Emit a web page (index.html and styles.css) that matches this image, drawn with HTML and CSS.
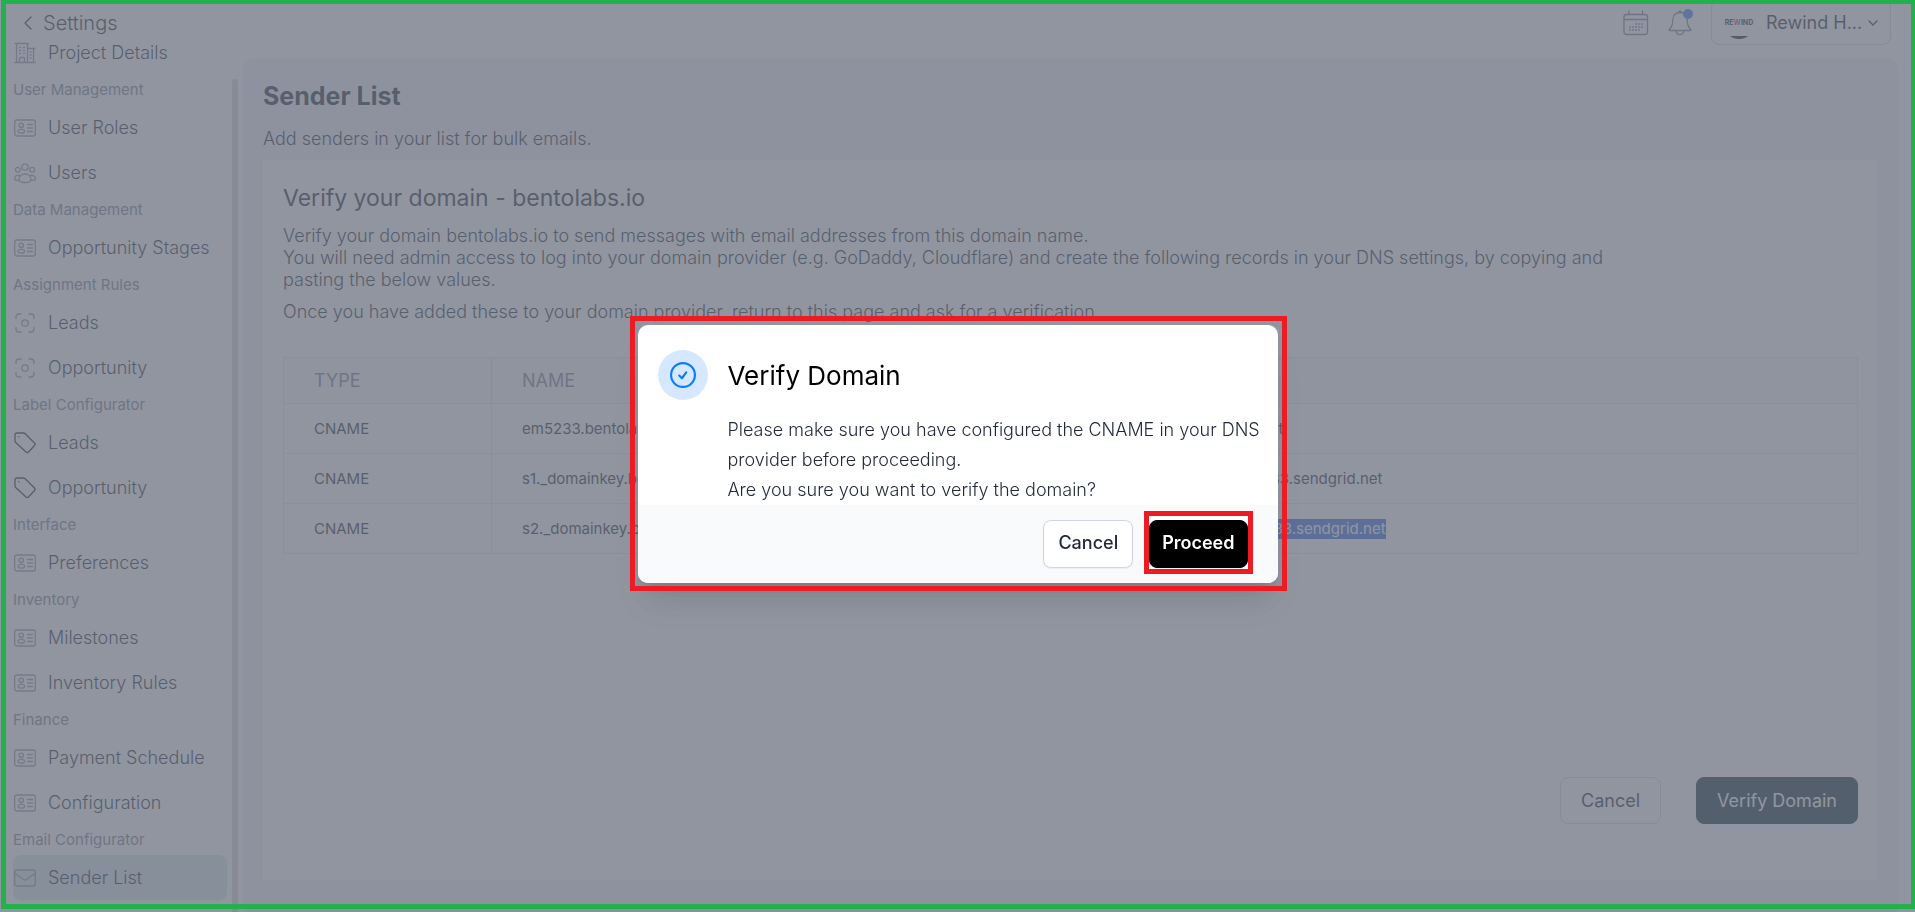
FILE: index.html
```html
<!DOCTYPE html>
<html lang="en">
<head>
    <meta charset="UTF-8">
    <meta name="viewport" content="width=device-width, initial-scale=1.0">
    <title>Sender List</title>
    <link rel="stylesheet" href="styles.css">
</head>
<body>
    <!-- Shared icons -->
    <svg class="icon-defs" aria-hidden="true">
        <symbol id="icon-building" viewBox="0 0 22 22">
            <path d="M0.700 20.500h20.600M2.500 20V1.500h11V20M1 1.500h13.500M13.500 6.500h6V20M13.500 6.500h7.500M5.500 20v-3.500q0-1 1-1h3q1 0 1 1V20" />
            <path d="M5.500 5.500h1M9.500 5.500h1M5.500 8.500h1M9.500 8.500h1M5.500 11.500h1M9.500 11.500h1M16 10h1M16 13h1M16 16h1" />
        </symbol>
        <symbol id="icon-card" viewBox="0 0 22 22">
            <rect x="0.700" y="3" width="20.600" height="16" rx="2" />
            <circle cx="7.300" cy="8.300" r="2.200" />
            <ellipse cx="7.300" cy="14.300" rx="3.300" ry="1.900" />
            <path d="M13.500 7.500h5M13.500 11h5M13.500 14.500h5" />
        </symbol>
        <symbol id="icon-users" viewBox="0 0 22 22">
            <circle cx="11" cy="5" r="3.200" />
            <circle cx="3.800" cy="7.800" r="2.400" />
            <circle cx="18.200" cy="7.800" r="2.400" />
            <path d="M11 12c-3.500 0-6 2.500-6 5.500 0 1.800 2.500 3 6 3s6-1.200 6-3c0-3-2.500-5.500-6-5.500zM5.500 13.500c-3-.8-5 1-5 3.300 0 1.200 2 1.700 4.500 1.500M16.500 13.500c3-.8 5 1 5 3.300 0 1.200-2 1.700-4.500 1.500" />
        </symbol>
        <symbol id="icon-focus" viewBox="0 0 22 22">
            <circle cx="11" cy="11" r="3.200" />
            <path d="M7 2H5Q2 2 2 5v1.500M15 2h2q3 0 3 3v1.500M7 20H5q-3 0-3-3v-1.500M15 20h2q3 0 3-3v-1.500" />
        </symbol>
        <symbol id="icon-tag" viewBox="0 0 22 22">
            <path d="M3 1h6.500q1 0 1.700.7l9.300 9.300q1.200 1.200 0 2.500l-6 6.500q-1.200 1.200-2.500 0L1.700 10.500Q1 9.800 1 8.800V3q0-2 2-2z" />
            <path d="M4.700 4.700h.2" />
        </symbol>
        <symbol id="icon-mail" viewBox="0 0 22 22">
            <rect x="0.700" y="3" width="20.600" height="16" rx="2" />
            <path d="M1 6.500l8.500 6q1.500 1 3 0l8.500-6" />
        </symbol>
    </svg>

    <div class="layout">
        <aside class="sidebar">
            <a class="back-link" href="#">
                <svg viewBox="0 0 10 16"><path d="M8 2L2 8l6 6" /></svg>
                <span>Settings</span>
            </a>
            <nav class="menu">
                <a href="#"><svg><use href="#icon-building" /></svg>Project Details</a>
                <h4>User Management</h4>
                <a href="#"><svg><use href="#icon-card" /></svg>User Roles</a>
                <a href="#"><svg><use href="#icon-users" /></svg>Users</a>
                <h4>Data Management</h4>
                <a href="#"><svg><use href="#icon-card" /></svg>Opportunity Stages</a>
                <h4>Assignment Rules</h4>
                <a href="#"><svg><use href="#icon-focus" /></svg>Leads</a>
                <a href="#"><svg><use href="#icon-focus" /></svg>Opportunity</a>
                <h4>Label Configurator</h4>
                <a href="#"><svg class="dark"><use href="#icon-tag" /></svg>Leads</a>
                <a href="#"><svg class="dark"><use href="#icon-tag" /></svg>Opportunity</a>
                <h4>Interface</h4>
                <a href="#"><svg><use href="#icon-card" /></svg>Preferences</a>
                <h4>Inventory</h4>
                <a href="#"><svg><use href="#icon-card" /></svg>Milestones</a>
                <a href="#"><svg><use href="#icon-card" /></svg>Inventory Rules</a>
                <h4>Finance</h4>
                <a href="#"><svg><use href="#icon-card" /></svg>Payment Schedule</a>
                <a href="#"><svg><use href="#icon-card" /></svg>Configuration</a>
                <h4>Email Configurator</h4>
                <a href="#" class="active"><svg><use href="#icon-mail" /></svg>Sender List</a>
            </nav>
        </aside>
        <div class="scrollbar"></div>

        <div class="content">
            <header class="topbar">
                <button class="icon-btn" aria-label="Calendar">
                    <svg viewBox="0 0 26 26">
                        <rect x="1" y="4.500" width="23.500" height="20" rx="2.500" />
                        <path d="M1 9.500h23.500M6 1v3.500M19.500 1v3.500" />
                        <path class="dots" d="M12.500 14h8M6.500 17h14M6.500 20h11" />
                    </svg>
                </button>
                <button class="icon-btn" aria-label="Notifications">
                    <svg viewBox="0 0 26 26">
                        <path d="M13 2.500c-4.500 0-7.200 3-7.200 7.200 0 5-1 7.300-3.300 9.500-.7.800-.4 1.300.5 1.300h20c.9 0 1.200-.5.500-1.300-2.300-2.200-3.300-4.500-3.300-9.500 0-4.200-2.700-7.200-7.200-7.200zM9.200 20.500c0 5.500 7.600 5.500 7.600 0M11.500 2q1.500-1.500 3 0" />
                    </svg>
                    <span class="badge"></span>
                </button>
                <button class="account">
                    <span class="logo"><span>RE<i>W</i>IND</span></span>
                    <span>Rewind H...</span>
                    <svg viewBox="0 0 12 8"><path d="M2 2l4 4 4-4" /></svg>
                </button>
            </header>

            <main class="page">
                <h1>Sender List</h1>
                <p class="subtitle">Add senders in your list for bulk emails.</p>
                <section class="card">
                    <h2>Verify your domain - bentolabs.io</h2>
                    <div class="description">
                        <p>Verify your domain bentolabs.io to send messages with email addresses from this domain name.<br>
                        You will need admin access to log into your domain provider (e.g. GoDaddy, Cloudflare) and create the following records in your DNS settings, by copying and pasting the below values.</p>
                        <p>Once you have added these to your domain provider, return to this page and ask for a verification.</p>
                    </div>
                    <table class="records">
                        <thead>
                            <tr><th class="col-type">TYPE</th><th class="col-name">NAME</th><th>VALUE</th></tr>
                        </thead>
                        <tbody>
                            <tr><td>CNAME</td><td>em5233.bentolabs.io</td><td>u3518431.wl133.sendgrid.net</td></tr>
                            <tr><td>CNAME</td><td>s1._domainkey.bentolabs.io</td><td>s1.domainkey.u3518431.wl133.sendgrid.net</td></tr>
                            <tr><td>CNAME</td><td>s2._domainkey.bentolabs.io</td><td><mark>s2.domainkey.u3518431.wl133.sendgrid.net</mark></td></tr>
                        </tbody>
                    </table>
                    <div class="card-actions">
                        <button class="btn">Cancel</button>
                        <button class="btn primary">Verify Domain</button>
                    </div>
                </section>
            </main>
        </div>
    </div>

    <!-- Confirmation dialog -->
    <div class="overlay">
        <div class="modal" role="dialog" aria-labelledby="modalTitle">
            <div class="modal-body">
                <div class="modal-icon">
                    <svg viewBox="0 0 24 24"><circle cx="12" cy="12" r="11" /><path d="M8.500 12.500l2.500 2.500 4-5.500" /></svg>
                </div>
                <div>
                    <h3 id="modalTitle">Verify Domain</h3>
                    <p>Please make sure you have configured the CNAME in your DNS provider before proceeding.<br>Are you sure you want to verify the domain?</p>
                </div>
            </div>
            <div class="modal-footer">
                <button class="modal-btn">Cancel</button>
                <div class="highlight">
                    <button class="modal-btn proceed">Proceed</button>
                </div>
            </div>
        </div>
    </div>
    <div class="frame"></div>
</body>
</html>
```

FILE: styles.css
```css
* {
    box-sizing: border-box;
}

body {
    font-family: Inter, "Liberation Sans", sans-serif;
    font-size: 18px;
    font-weight: 300;
    margin: 0;
    color: #1f2937;
    background-color: white;
    overflow: hidden;
}

h1, h2, h3, h4, p {
    margin: 0;
}

a {
    color: inherit;
    text-decoration: none;
}

button {
    font-family: inherit;
    font-size: 18px;
    color: inherit;
    background: none;
    border: none;
    padding: 0;
    cursor: pointer;
    white-space: nowrap;
}

svg {
    fill: none;
    stroke: currentColor;
    stroke-width: 1.3;
    stroke-linecap: round;
    stroke-linejoin: round;
    flex-shrink: 0;
}

.icon-defs {
    display: none;
}

.layout {
    display: flex;
    height: 100vh;
}

/* Sidebar */
.sidebar {
    width: 232px;
    padding: 0 5px 0 13px;
    flex-shrink: 0;
}

.back-link {
    display: flex;
    align-items: center;
    gap: 10px;
    height: 30px;
    padding: 16px 0 0 10px;
    font-size: 20px;
    line-height: 14px;
}

.back-link svg {
    width: 10px;
    height: 16px;
}

.menu a {
    display: flex;
    align-items: center;
    gap: 12px;
    height: 45px;
    padding-left: 1px;
    border-radius: 8px;
}

.menu a.active {
    background-color: #dbe6e9;
}

.menu svg {
    width: 22px;
    height: 22px;
    color: #8f95a3;
}

.menu svg.dark {
    color: #1f2937;
}

.menu h4 {
    font-size: 15px;
    font-weight: 400;
    line-height: 30px;
    color: #7b8190;
}

.scrollbar {
    width: 6px;
    margin-top: 79px;
    border-radius: 3px 3px 0 0;
    background-color: #d6d6d8;
    flex-shrink: 0;
}

/* Top bar */
.content {
    flex: 1;
    display: flex;
    flex-direction: column;
    padding: 0 17px 0 5px;
}

.topbar {
    display: flex;
    align-items: flex-start;
    justify-content: flex-end;
    gap: 18px;
    height: 58px;
    padding-right: 7px;
}

.icon-btn {
    position: relative;
    height: 46px;
    color: #7b8190;
}

.icon-btn svg {
    display: block;
    width: 26px;
    height: 26px;
}

.icon-btn .dots {
    stroke-dasharray: 1 2;
}

.badge {
    position: absolute;
    top: 9px;
    right: 0;
    width: 10px;
    height: 10px;
    border-radius: 50%;
    background-color: #3b82f6;
}

.account {
    display: flex;
    align-items: center;
    gap: 5px;
    width: 180px;
    height: 45px;
    padding: 0 10px 0 11px;
    border: 1px solid #d1d5db;
    border-radius: 8px;
    font-weight: 400;
}

.account > svg {
    width: 12px;
    height: 8px;
}

.logo {
    display: flex;
    align-items: center;
    justify-content: center;
    width: 32px;
    height: 32px;
    margin-right: 6px;
    border-radius: 50%;
    background: linear-gradient(white 92%, #111827 92%);
    font-size: 7px;
    font-weight: 700;
}

.logo i {
    font-style: normal;
    color: #be3f7c;
}

/* Page */
.page {
    flex: 1;
    display: flex;
    flex-direction: column;
    padding: 20px 20px 32px;
    border-radius: 12px 12px 0 0;
    background-color: #f3f4f8;
}

h1 {
    font-size: 25px;
    font-weight: 700;
    line-height: 36px;
}

.subtitle {
    margin: 14px 0 10px;
    line-height: 22px;
}

.card {
    flex: 1;
    display: flex;
    flex-direction: column;
    padding: 22px 20px 56px;
    background-color: white;
}

h2 {
    font-size: 23px;
    font-weight: 400;
    line-height: 32px;
}

.description {
    max-width: 84%;
    margin: 11px 0 34px;
    line-height: 22px;
}

.description p + p {
    margin-top: 10px;
}

/* DNS records */
.records {
    width: 100%;
    border-collapse: collapse;
    table-layout: fixed;
    border: 1px solid #e5e7eb;
}

.records th {
    height: 46px;
    padding: 0 30px;
    border-bottom: 1px solid #e5e7eb;
    background-color: #f9fafb;
    font-weight: 400;
    text-align: left;
    color: #7b8190;
}

.records td {
    height: 50px;
    padding: 0 30px;
    border-bottom: 1px solid #e5e7eb;
    font-size: 15px;
    font-weight: 400;
}

.records th:first-child,
.records td:first-child {
    border-right: 1px solid #e5e7eb;
}

.col-type {
    width: 208px;
}

.col-name {
    width: 556px;
}

mark {
    display: inline-block;
    line-height: 20px;
    color: white;
    background-color: #3568e0;
}

.card-actions {
    display: flex;
    justify-content: flex-end;
    gap: 35px;
    margin-top: auto;
}

.btn {
    height: 47px;
    padding: 0 20px;
    border: 1px solid #d1d5db;
    border-radius: 8px;
    font-weight: 400;
}

.btn.primary {
    border-color: #102a34;
    background-color: #102a34;
    color: white;
}

/* Modal */
.overlay {
    position: fixed;
    inset: 0;
    display: flex;
    align-items: center;
    justify-content: center;
    padding-bottom: 4px;
    background-color: rgba(107, 114, 128, 0.75);
}

.modal {
    position: relative;
    width: 640px;
    border-radius: 10px;
    background-color: white;
    box-shadow: 0 25px 31px -6px rgba(0, 0, 0, 0.1), 0 10px 12px -6px rgba(0, 0, 0, 0.1);
}

.modal::after {
    content: "";
    position: absolute;
    inset: -9px -9px -8px -8px;
    border: 5px solid #ed1c24;
    pointer-events: none;
}

.modal-body {
    display: flex;
    gap: 20px;
    padding: 25px 12px 0 20px;
}

.modal-icon {
    display: flex;
    align-items: center;
    justify-content: center;
    width: 50px;
    height: 50px;
    border-radius: 50%;
    background-color: #d6e8ff;
    color: #0a7cff;
    flex-shrink: 0;
}

.modal-icon svg {
    width: 26px;
    height: 26px;
    stroke-width: 2;
}

.modal h3 {
    margin-bottom: 13px;
    font-size: 26px;
    font-weight: 400;
    line-height: 52px;
    color: black;
}

.modal p {
    line-height: 30px;
}

.modal-footer {
    display: flex;
    justify-content: flex-end;
    gap: 16px;
    padding: 15px 30px;
    border-radius: 0 0 10px 10px;
    background-color: #f9fafb;
}

.modal-btn {
    display: block;
    height: 48px;
    padding: 0 14px 3px;
    border: 1px solid #d1d5db;
    border-radius: 8px;
    background-color: white;
    font-weight: 500;
    box-shadow: 0 1px 2px rgba(0, 0, 0, 0.05);
}

.modal-btn.proceed {
    padding: 0 12px 3px;
    border-color: black;
    background-color: black;
    color: white;
    font-weight: 600;
}

.highlight {
    margin: -9px -5px -6px;
    padding: 4px 0 1px;
    border: 5px solid #ed1c24;
    background-color: white;
}

.frame {
    position: fixed;
    inset: 0 0 3px 1px;
    border: solid #22b14c;
    border-width: 4px 4px 5px 5px;
    pointer-events: none;
}
```
